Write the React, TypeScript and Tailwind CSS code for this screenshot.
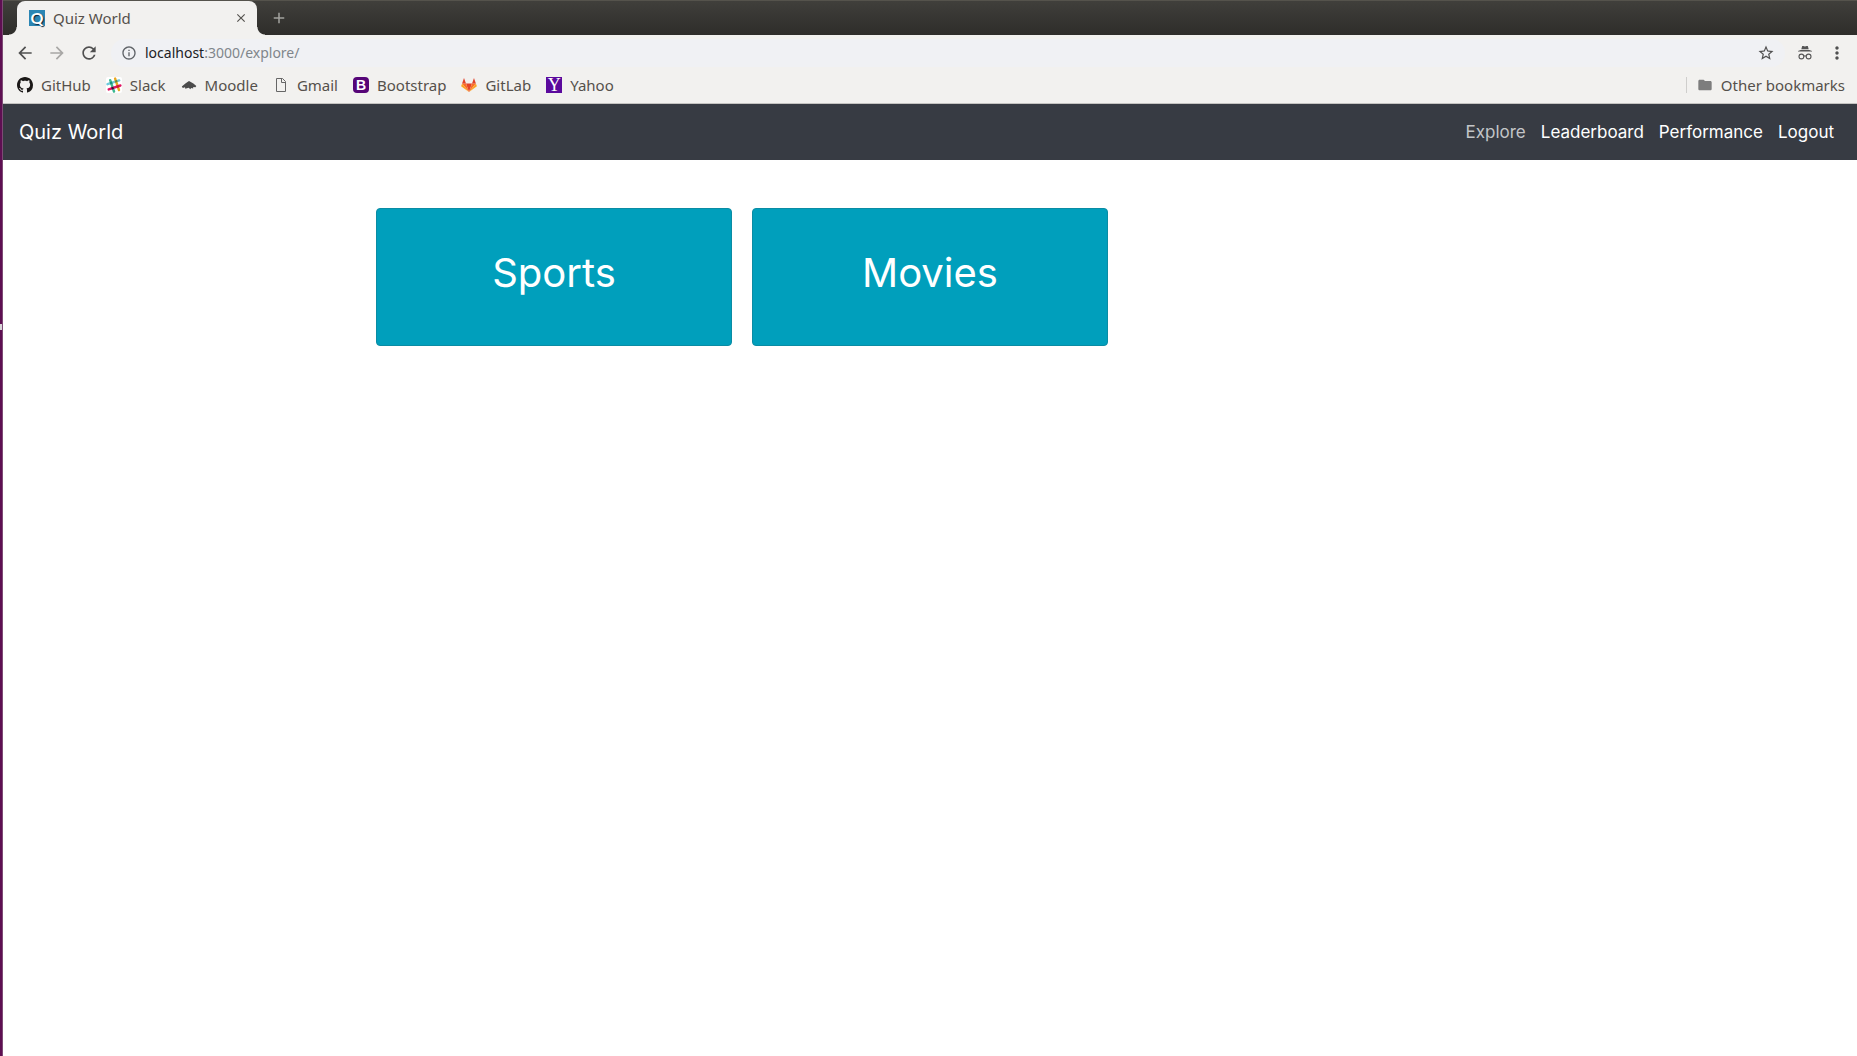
import React, { useState } from "react";
import { MdArrowBack, MdArrowForward, MdRefresh, MdInfoOutline, MdStarBorder, MdMoreVert, MdFolder, MdClose, MdAdd } from "react-icons/md";

function QuizFavicon() {
  return (
    <span aria-hidden="true" className="flex size-4 shrink-0 items-center justify-center bg-[#2b86b4] font-['Lato'] text-base leading-none font-bold text-white [text-shadow:1px_1px_1px_#123]">
      Q
    </span>
  );
}

function GithubIcon() {
  return (
    <svg viewBox="0 0 16 16" className="size-4 shrink-0" aria-hidden="true" fill="#1b1817">
      <path d="M8 0C3.58 0 0 3.58 0 8c0 3.54 2.29 6.53 5.47 7.59.4.07.55-.17.55-.38 0-.19-.01-.82-.01-1.49-2.01.37-2.53-.49-2.69-.94-.09-.23-.48-.94-.82-1.13-.28-.15-.68-.52-.01-.53.63-.01 1.08.58 1.23.82.72 1.21 1.87.87 2.33.66.07-.52.28-.87.51-1.07-1.78-.2-3.64-.89-3.64-3.95 0-.87.31-1.59.82-2.15-.08-.2-.36-1.02.08-2.12 0 0 .67-.21 2.2.82.64-.18 1.32-.27 2-.27s1.36.09 2 .27c1.53-1.04 2.2-.82 2.2-.82.44 1.1.16 1.92.08 2.12.51.56.82 1.27.82 2.15 0 3.07-1.87 3.75-3.65 3.95.29.25.54.73.54 1.48 0 1.07-.01 1.93-.01 2.2 0 .21.15.46.55.38A8.01 8.01 0 0 0 16 8c0-4.42-3.58-8-8-8z" />
    </svg>
  );
}

function SlackIcon() {
  return (
    <svg viewBox="0 0 16 16" className="size-4 shrink-0" aria-hidden="true">
      <rect width="16" height="16" rx="2" fill="#fff" />
      <g strokeWidth="2.4" strokeLinecap="round" fill="none">
        <path d="M1.5 7.2 13.2 3.4" stroke="#70cadb" />
        <path d="M9.1 1.6 13 13" stroke="#e9a820" />
        <path d="M4.2 3.2 8 14.5" stroke="#3eb991" />
        <path d="M2.7 12.4 14.4 8.5" stroke="#e01563" />
      </g>
      <path d="m5.2 10.5 2.1-.7.7 2.1-2.1.7z" fill="#361238" />
      <path d="m10.3 8.8 2.1-.7.7 2.1-2.1.7z" fill="#cc2027" />
      <path d="m3.8 5.3 2.1-.7.7 2.1-2.1.7z" fill="#1a937d" />
      <path d="m8.8 3.7 2.1-.7.7 2.1-2.1.7z" fill="#65863a" />
    </svg>
  );
}

function MoodleIcon() {
  return (
    <svg viewBox="0 0 16 16" className="size-4 shrink-0" aria-hidden="true" fill="#4b4b4b">
      <path d="M.8 9.6 4.7 6.2 8 4l4.4 2.6 2.9 2.5-.8 1.2-2.2-.2-.2 1.3-2-.4-.8 1.2-1.6-1.4-3.4 1-.3-1.5-2.2.6z" />
    </svg>
  );
}

function PageIcon() {
  return (
    <svg viewBox="0 0 16 16" className="size-4 shrink-0" aria-hidden="true" fill="none" stroke="#666" strokeWidth="1">
      <path d="M3.5 1.5h6l3 3v10h-9zM8.5 1.5v4h4" />
    </svg>
  );
}

function BootstrapIcon() {
  return (
    <span aria-hidden="true" className="flex size-4 shrink-0 items-center justify-center rounded-sm bg-[#560577] font-['Liberation_Sans'] text-sm leading-none font-bold text-white">
      B
    </span>
  );
}

function GitlabIcon() {
  return (
    <svg viewBox="0 0 16 16" className="size-4 shrink-0" aria-hidden="true">
      <path d="M8 15 5 6.5h6z" fill="#e24329" />
      <path d="M8 15 5 6.5H1.1z" fill="#fc6d26" />
      <path d="M8 15 11 6.5h3.9z" fill="#fc6d26" />
      <path d="M1.1 6.5.1 9.2 8 15z" fill="#fca326" />
      <path d="m14.9 6.5 1 2.7L8 15z" fill="#fca326" />
      <path d="M1.1 6.5H5L3 1z" fill="#e24329" />
      <path d="M14.9 6.5H11L13 1z" fill="#e24329" />
    </svg>
  );
}

function YahooIcon() {
  return (
    <span aria-hidden="true" className="flex size-4 shrink-0 items-center justify-center bg-[#5b0a9d] font-['Liberation_Serif'] text-lg leading-none text-white">
      Y
    </span>
  );
}

function IncognitoIcon() {
  return (
    <svg viewBox="0 0 16 16" className="size-4" aria-hidden="true">
      <path d="M4.3 4.2 5.2 1h1.2L8 1.6 9.6 1h1.2l.9 3.2z" fill="#555" />
      <path d="M1 6 3.6 5h8.8L15 6v.6H1z" fill="#555" />
      <g fill="none" stroke="#555" strokeWidth="1.1">
        <circle cx="4.4" cy="11.5" r="2.4" />
        <circle cx="11.6" cy="11.5" r="2.4" />
        <path d="M6.8 11.2q1.2-.8 2.4 0" />
      </g>
    </svg>
  );
}

const bookmarks = [
  { label: "GitHub", icon: <GithubIcon /> },
  { label: "Slack", icon: <SlackIcon /> },
  { label: "Moodle", icon: <MoodleIcon /> },
  { label: "Gmail", icon: <PageIcon /> },
  { label: "Bootstrap", icon: <BootstrapIcon /> },
  { label: "GitLab", icon: <GitlabIcon /> },
  { label: "Yahoo", icon: <YahooIcon /> },
];

const links = ["Explore", "Leaderboard", "Performance", "Logout"];
const categories = ["Sports", "Movies"];

function TabStrip() {
  return (
    <div className="flex h-[35px] items-end border-t border-[#55534c] bg-linear-to-b from-[#403f3b] to-[#2e2d2a] pl-[14px]">
      <div className="relative flex h-[34px] w-60 items-center rounded-t-lg bg-[#f2f1ef] pr-2 pb-px pl-3">
        <span className="absolute bottom-0 -left-2 size-2 bg-radial-[circle_at_0_0] from-transparent from-[7px] to-[#f2f1ef] to-[8px]" />
        <span className="absolute -right-2 bottom-0 size-2 bg-radial-[circle_at_100%_0] from-transparent from-[7px] to-[#f2f1ef] to-[8px]" />
        <QuizFavicon />
        <span className="ml-2 flex-1 text-[#55504b]">Quiz World</span>
        <button aria-label="Close tab" className="flex size-4 items-center justify-center text-[#55534f]">
          <MdClose className="size-3.5" />
        </button>
      </div>
      <button aria-label="New tab" className="ml-[13px] flex h-[34px] items-center text-[#a3a29f]">
        <MdAdd className="size-[18px]" />
      </button>
    </div>
  );
}

function Toolbar() {
  const [url, setUrl] = useState("localhost:3000/explore/");
  const colon = url.indexOf(":");
  const host = colon < 0 ? url : url.slice(0, colon);
  return (
    <div className="flex h-9 items-center pr-[10px] pl-3 text-[#505050]">
      <button aria-label="Back"><MdArrowBack className="size-5" /></button>
      <button aria-label="Forward" className="ml-3 text-[#a8a7a5]"><MdArrowForward className="size-5" /></button>
      <button aria-label="Reload" className="ml-3"><MdRefresh className="size-5" /></button>
      <div className="ml-3 flex h-7 flex-1 items-center rounded-full bg-[#f0f1f4] pr-[10px] pl-[10px]">
        <MdInfoOutline className="size-4 text-[#5f6368]" />
        <div className="relative ml-2 flex-1 text-sm leading-5">
          <div aria-hidden="true" className="text-[#80868b]">
            <span className="text-[#202124]">{host}</span>{url.slice(host.length)}
          </div>
          <input aria-label="Address" value={url} onChange={(e) => setUrl(e.target.value)} className="absolute inset-0 w-full bg-transparent text-transparent caret-black outline-none" />
        </div>
        <button aria-label="Bookmark this page"><MdStarBorder className="size-[18px]" /></button>
      </div>
      <div className="ml-3 flex items-center gap-[14px]">
        <button aria-label="Incognito"><IncognitoIcon /></button>
        <button aria-label="Menu"><MdMoreVert className="size-5" /></button>
      </div>
    </div>
  );
}

function BookmarksBar() {
  return (
    <div className="flex h-[33px] items-center justify-between border-b border-[#c4c3c1] pr-3 pb-1 pl-[14px] text-[#55504b]">
      <div className="flex gap-[15px]">
        {bookmarks.map((b) => (
          <a key={b.label} href="#" className="flex items-center gap-2">
            {b.icon}
            {b.label}
          </a>
        ))}
      </div>
      <button className="flex items-center gap-2 border-l border-[#cfcecc] pl-[10px] leading-4">
        <MdFolder className="size-4 text-[#7d7d7d]" />
        Other bookmarks
      </button>
    </div>
  );
}

export default function App() {
  return (
    <div className="flex min-h-screen bg-white">
      <aside className="relative w-[3px] shrink-0 border-r border-[#7d4a75] bg-[#5e0f52]">
        <span className="absolute top-[324px] left-0 h-[6px] w-[2px] bg-[#d8d4d8]" />
      </aside>
      <div className="min-w-0 flex-1">
        <header className="bg-[#f2f1ef] font-['Noto_Sans',sans-serif] text-[15px] leading-5">
          <TabStrip />
          <Toolbar />
          <BookmarksBar />
        </header>
        <nav className="flex h-14 items-center justify-between bg-[#373b43] px-4 font-['Inter',sans-serif] text-white">
          <a href="#" className="text-xl">Quiz World</a>
          <ul className="flex gap-[15px] pr-[7px] pb-px text-[17px] leading-6">
            {links.map((l) => (
              <li key={l}>
                <a href="#" className={l === "Explore" ? "text-[#c3c5c8]" : "text-white"}>{l}</a>
              </li>
            ))}
          </ul>
        </nav>
        <main className="mx-auto grid max-w-[1108px] grid-cols-3 gap-5 pt-12 font-['Inter',sans-serif]">
          {categories.map((c) => (
            <a key={c} href="#" className="flex h-[138px] justify-center rounded border border-[#0a8ca4] bg-[#009fbc] pt-10 text-[40px] leading-12 font-normal text-white">
              {c}
            </a>
          ))}
        </main>
      </div>
    </div>
  );
}
